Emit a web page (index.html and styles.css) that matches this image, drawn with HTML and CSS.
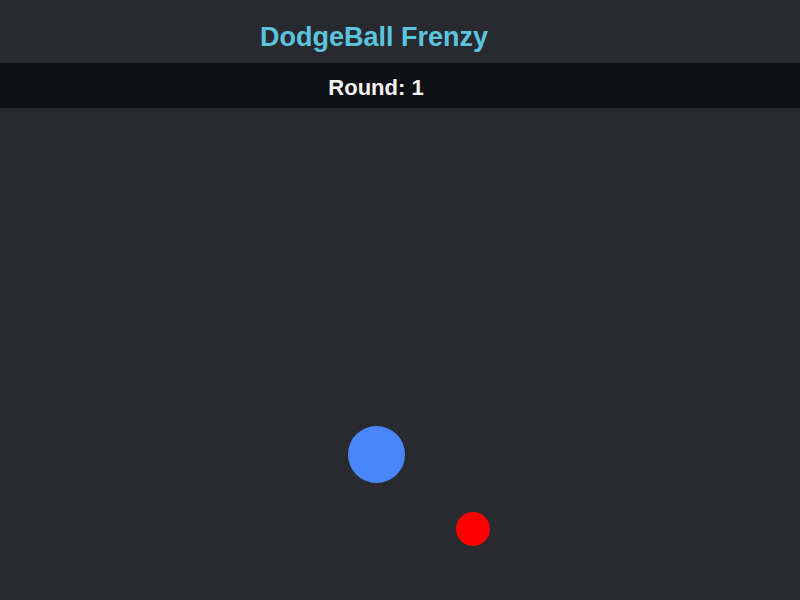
FILE: index.html
```html
<!DOCTYPE html>
<html lang="en">
<head>
  <meta charset="UTF-8">
  <meta name="viewport" content="width=device-width, initial-scale=1.0">
  <title>DodgeBall Frenzy</title>
  <link rel="stylesheet" href="styles.css">
</head>
<body>
  <h1 class="title">DodgeBall Frenzy</h1>
  <div class="round-bar">
    <span id="round">Round: 1</span>
  </div>
  <div class="arena" id="arena">
    <div class="ball player" style="left: 348px; top: 318px;"></div>
    <div class="ball enemy" style="left: 456px; top: 404px;"></div>
  </div>
</body>
</html>
```
FILE: styles.css
```css
html, body {
  height: 100%;
}
body {
  margin: 0;
  background-color: #282a30;
  font-family: "Liberation Sans", Arial, sans-serif;
  display: flex;
  flex-direction: column;
  overflow: hidden;
}
.title {
  margin: 0;
  height: 63px;
  padding: 11px 52px 0 0;
  box-sizing: border-box;
  display: flex;
  align-items: center;
  justify-content: center;
  font-size: 27px;
  color: #5cc4dc;
}
.round-bar {
  height: 45px;
  padding: 5px 48px 0 0;
  box-sizing: border-box;
  display: flex;
  align-items: center;
  justify-content: center;
  background-color: #0f1014;
  color: #f2f2f2;
  font-size: 22px;
  font-weight: bold;
}
.arena {
  position: relative;
  flex: 1;
}
.ball {
  position: absolute;
  border-radius: 50%;
}
.player {
  width: 57px;
  height: 57px;
  background-color: #4a86fb;
}
.enemy {
  width: 34px;
  height: 34px;
  background-color: #ff0000;
}
```
